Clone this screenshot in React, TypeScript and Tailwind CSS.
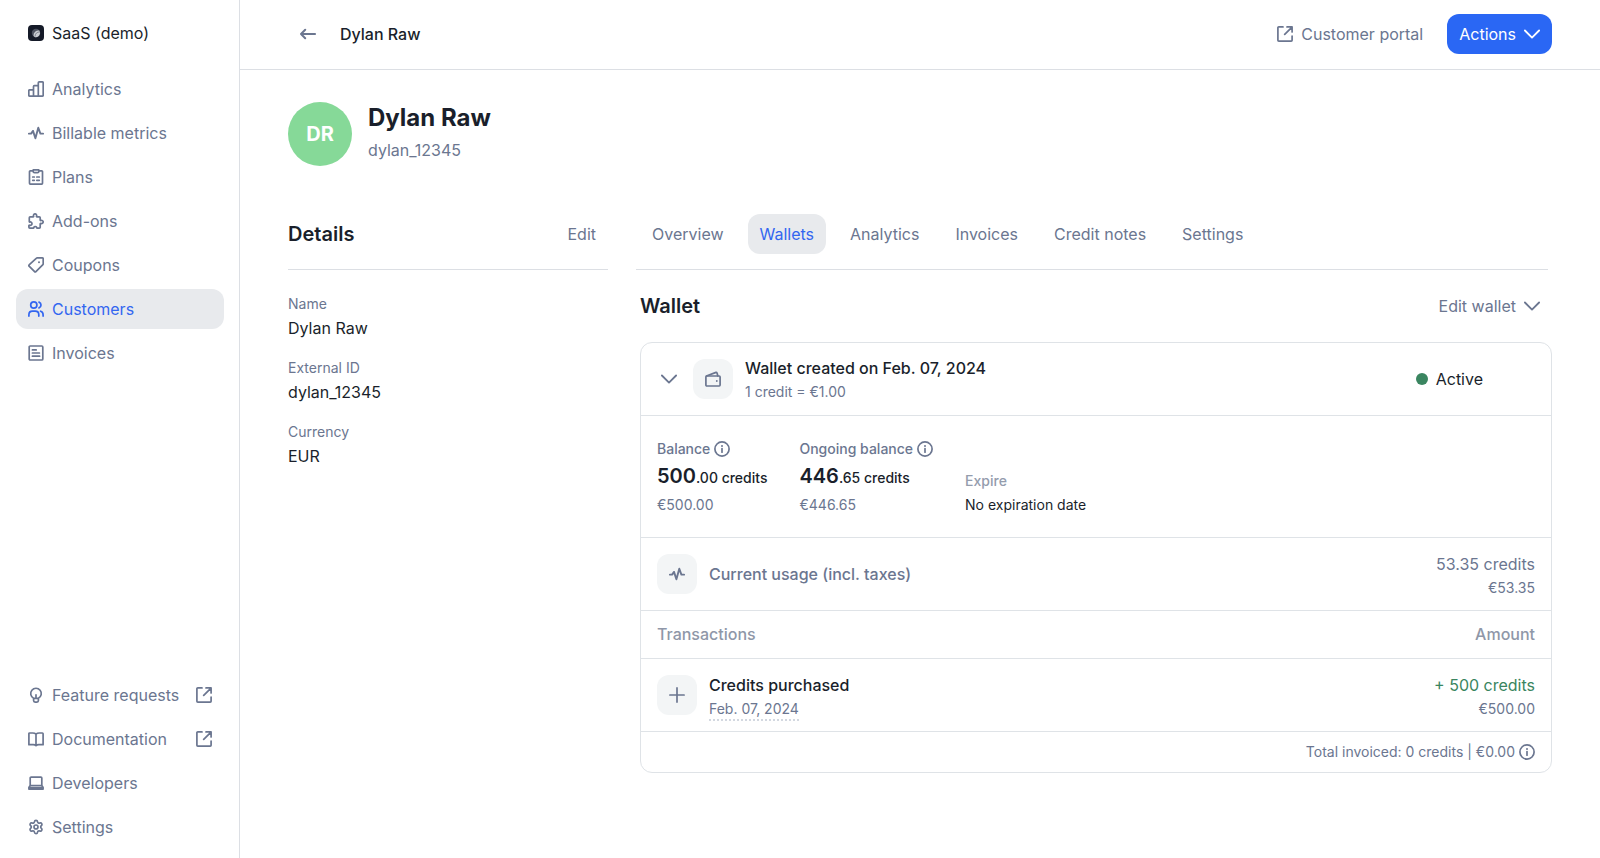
import type { ReactNode } from "react";
import { Settings } from "lucide-react";

type IconProps = { className?: string; children?: ReactNode };

function Icon({ className = "size-4", children }: IconProps) {
  return (
    <svg
      viewBox="0 0 16 16"
      fill="none"
      stroke="currentColor"
      strokeWidth="1.7"
      strokeLinecap="round"
      strokeLinejoin="round"
      aria-hidden="true"
      className={`shrink-0 ${className}`}
    >
      {children}
    </svg>
  );
}

const ChartIcon = () => (
  <Icon>
    <path d="M5.5 15.1H1.7a.9.9 0 0 1-.9-.9V9.7c0-.5.4-.9.9-.9h3.8M5.5 15.1V5.6c0-.5.4-.9.9-.9h3.9M5.5 15.1h4.8M10.3 15.1V1.8c0-.5.4-.9.9-.9h3.1c.5 0 .9.4.9.9v12.4c0 .5-.4.9-.9.9h-4z" />
  </Icon>
);

const PulseIcon = () => (
  <Icon>
    <path d="M.9 8.6h2.2L5 5.9l2.4 7.4 2.9-10.6 2.1 5.9h2.7" strokeWidth="1.9" />
  </Icon>
);

const BoardIcon = () => (
  <Icon>
    <path d="M5 1.9H2.3a.8.8 0 0 0-.8.8v11.6c0 .5.3.8.8.8h11.4c.5 0 .8-.3.8-.8V2.7a.8.8 0 0 0-.8-.8H11" />
    <path d="M5.2.9h5.6v1.5a1.3 1.3 0 0 1-1.3 1.3h-3a1.3 1.3 0 0 1-1.3-1.3V.9z" />
    <path d="M4.7 8h1.6M8.8 8h2.5M4.7 11.3h1.6M8.8 11.3h2.5" />
  </Icon>
);

const PuzzleIcon = () => (
  <Icon>
    <path d="M2.3 3.9h2.9c.4 0 .5-.4.4-.7a1.6 1.6 0 1 1 2.9 0c-.1.3 0 .7.4.7h2.4c.5 0 .9.4.9.9v2.3c0 .4.4.5.7.4a1.6 1.6 0 1 1 0 2.9c-.3-.1-.7 0-.7.4v3.4c0 .5-.4.9-.9.9H9.1c-.4 0-.5-.4-.4-.7a1.6 1.6 0 0 0-2.9 0c.1.3 0 .7-.4.7H1.8a.9.9 0 0 1-.9-.9v-1.6c0-.4.4-.5.7-.4a1.7 1.7 0 1 0 0-3.1c-.2 0-.3-.1-.3-.3V4.800c0-.5.4-.9.9-.9" />
  </Icon>
);

const TagIcon = () => (
  <Icon>
    <path d="M9.2.9h5.1c.5 0 .9.4.9.9v5.1c0 .3-.1.5-.3.7l-7 7.1c-.4.4-1 .4-1.3 0L1.1 9.2c-.4-.4-.4-1 0-1.3L8.5 1.2c.2-.2.4-.3.7-.3z" />
    <circle cx="11" cy="5.2" r="1" fill="currentColor" stroke="none" />
  </Icon>
);

const UsersIcon = () => (
  <Icon>
    <circle cx="5.8" cy="4" r="3.1" />
    <path d="M.9 15.1v-1.4c0-2.2 1.7-3.6 3.6-3.6h2.7c1.9 0 3.6 1.4 3.6 3.6v1.4M11 1.1a3.1 3.1 0 0 1 0 5.8M12.6 10.2c1.5.4 2.5 1.7 2.5 3.5v1.4" />
  </Icon>
);

const DocumentIcon = () => (
  <Icon>
    <rect x="1.2" y="1" width="13.6" height="14" rx="1" />
    <path d="M4.4 4.9h3.8M4.4 8h7M4.4 11.2h7.2" />
  </Icon>
);

const BulbIcon = () => (
  <Icon>
    <path d="M5.6 11.3a5.300 5.300 0 1 1 4.800 0M5.6 11.300v2.300c0 .8.700 1.500 1.500 1.500h1.800c.8 0 1.500-.7 1.500-1.500v-2.300zM8 11V7.800" />
  </Icon>
);

const BookIcon = () => (
  <Icon>
    <path d="M8 3.2C7.2 2.4 6 2 4.7 2H1.6c-.4 0-.7.3-.7.7v11h4.3c1.2 0 2.2.3 2.8.9.6-.6 1.6-.9 2.8-.9h4.3v-11c0-.4-.3-.7-.7-.7h-3.1C10 2 8.8 2.4 8 3.2zM8 3.2v11" />
  </Icon>
);

const LaptopIcon = () => (
  <Icon>
    <path d="M2.2 10.5V3.1c0-.5.4-.9.9-.9h9.8c.5 0 .9.4.9.9v7.4M.9 14.1v-1.600l1.300-2h11.600l1.300 2v1.600zM1 12.700h14" />
  </Icon>
);

const ExternalIcon = () => (
  <Icon>
    <path d="M6 .9H1.800a.9.9 0 0 0-.9.9v12.400c0 .5.4.9.9.9h12.400c.5 0 .9-.4.9-.9V10M10 .9h5.100V6M15 1.100L7.700 8.400" />
  </Icon>
);

const ArrowLeftIcon = () => (
  <Icon>
    <path d="M15.1 8H1M5.200 3.800L1 8l4.200 4.200" strokeWidth="2" />
  </Icon>
);

const ChevronDownIcon = () => (
  <Icon>
    <path d="M.9 4.500L8 11.600l7.100-7.100" strokeWidth="1.800" />
  </Icon>
);

const WalletIcon = () => (
  <Icon>
    <rect x=".9" y="5" width="14.2" height="10" rx=".9" />
    <path d="M1.400 5L11 1.400c.5-.2 1 .1 1.100.6L12.800 5" />
    <circle cx="11.8" cy="10" r=".9" fill="currentColor" stroke="none" />
  </Icon>
);

const PlusIcon = () => (
  <Icon>
    <path d="M8 .9v14.200M.9 8h14.200" />
  </Icon>
);

const InfoIcon = () => (
  <Icon>
    <circle cx="8" cy="8" r="7.1" />
    <path d="M8 7.600v3.600" />
    <circle cx="8" cy="4.900" r="1" fill="currentColor" stroke="none" />
  </Icon>
);

const MAIN_NAV = [
  { label: "Analytics", icon: <ChartIcon /> },
  { label: "Billable metrics", icon: <PulseIcon /> },
  { label: "Plans", icon: <BoardIcon /> },
  { label: "Add-ons", icon: <PuzzleIcon /> },
  { label: "Coupons", icon: <TagIcon /> },
  { label: "Customers", icon: <UsersIcon />, active: true },
  { label: "Invoices", icon: <DocumentIcon /> },
];

const BOTTOM_NAV = [
  { label: "Feature requests", icon: <BulbIcon />, external: true },
  { label: "Documentation", icon: <BookIcon />, external: true },
  { label: "Developers", icon: <LaptopIcon /> },
  { label: "Settings", icon: <Settings className="size-4 shrink-0" strokeWidth={2.5} aria-hidden="true" /> },
];

const TABS = ["Overview", "Wallets", "Analytics", "Invoices", "Credit notes", "Settings"];

const DETAILS = [
  { label: "Name", value: "Dylan Raw" },
  { label: "External ID", value: "dylan_12345" },
  { label: "Currency", value: "EUR" },
];

const BALANCES = [
  { label: "Balance", whole: "500", cents: ".00 credits", amount: "€500.00" },
  { label: "Ongoing balance", whole: "446", cents: ".65 credits", amount: "€446.65" },
];

function NavItem({
  label,
  icon,
  active,
  external,
}: {
  label: string;
  icon: ReactNode;
  active?: boolean;
  external?: boolean;
}) {
  return (
    <li>
      <a
        href="#"
        aria-current={active ? "page" : undefined}
        className={`flex h-10 items-center gap-2 rounded-xl px-3 ${
          active ? "bg-[#e8eaed] text-[#3366f0]" : "text-[#6b7690]"
        }`}
      >
        {icon}
        <span className="flex-1 whitespace-nowrap">{label}</span>
        {external && <ExternalIcon />}
      </a>
    </li>
  );
}

function Sidebar() {
  return (
    <aside className="flex w-60 shrink-0 flex-col border-r border-[#dcdfe4] pt-[13px] pr-[15px] pb-[11px] pl-4">
      <button type="button" className="flex h-10 items-center gap-2 px-3 text-left">
        <svg viewBox="0 0 16 16" className="size-4 shrink-0" aria-hidden="true">
          <rect width="16" height="16" rx="4" fill="#151a28" />
          <circle cx="8" cy="8" r="4.2" fill="#4d5260" />
          <path d="M5.500 10.800a5 5 0 0 1 5.800-5.200 4.200 4.200 0 0 1-4.700 6.400z" fill="#c9ccd2" />
          <path d="M7 11.500a5 5 0 0 1 5-4.600" stroke="#6d717d" strokeWidth=".8" fill="none" />
        </svg>
        SaaS (demo)
      </button>
      <nav aria-label="Main" className="mt-4">
        <ul className="flex flex-col gap-1">
          {MAIN_NAV.map((item) => (
            <NavItem key={item.label} {...item} />
          ))}
        </ul>
      </nav>
      <nav aria-label="Resources" className="mt-auto">
        <ul className="flex flex-col gap-1">
          {BOTTOM_NAV.map((item) => (
            <NavItem key={item.label} {...item} />
          ))}
        </ul>
      </nav>
    </aside>
  );
}

function TopBar() {
  return (
    <header className="flex h-[70px] items-center border-b border-[#dcdfe4] px-12 pb-px">
      <button
        type="button"
        aria-label="Back to customers"
        className="flex size-10 items-center justify-center text-[#6b7690]"
      >
        <ArrowLeftIcon />
      </button>
      <span className="ml-3 flex-1 font-medium">Dylan Raw</span>
      <a href="#" className="flex h-10 items-center gap-2 px-3 text-[#6b7690]">
        <ExternalIcon />
        Customer portal
      </a>
      <button
        type="button"
        className="ml-3 flex h-10 items-center gap-2 rounded-xl bg-[#2a67f4] px-3 text-white"
      >
        Actions
        <ChevronDownIcon />
      </button>
    </header>
  );
}

function Details() {
  return (
    <section className="w-80 shrink-0">
      <div className="flex h-14 items-start justify-between border-b border-[#dcdfe4]">
        <h2 className="text-xl leading-10 font-semibold">Details</h2>
        <button type="button" className="h-10 px-3 text-[#6b7690]">
          Edit
        </button>
      </div>
      <dl className="mt-[22px] flex flex-col gap-4">
        {DETAILS.map((d) => (
          <div key={d.label}>
            <dt className="text-sm leading-6 text-[#6b7690]">{d.label}</dt>
            <dd className="leading-6">{d.value}</dd>
          </div>
        ))}
      </dl>
    </section>
  );
}

function IconTile({ children }: { children: ReactNode }) {
  return (
    <span className="flex size-10 shrink-0 items-center justify-center rounded-xl bg-[#f3f5f6] text-[#6b7690]">
      {children}
    </span>
  );
}

function WalletCard() {
  return (
    <article className="rounded-xl border border-[#dfe3e7]">
      <div className="flex h-[73px] items-center border-b border-[#dfe3e7] px-5">
        <button type="button" aria-label="Collapse wallet" className="mr-4 text-[#6b7690]">
          <ChevronDownIcon />
        </button>
        <IconTile>
          <WalletIcon />
        </IconTile>
        <div className="ml-3 flex-1 pt-0.5 leading-6">
          <h3 className="font-medium">Wallet created on Feb. 07, 2024</h3>
          <p className="text-sm leading-6 text-[#6b7690]">1 credit = €1.00</p>
        </div>
        <div className="mr-12 flex items-center gap-2">
          <span className="size-3 rounded-full bg-[#3a8560]" />
          Active
        </div>
      </div>

      <div className="flex h-[122px] items-center border-b border-[#dfe3e7] px-4">
        <div className="flex items-end gap-8">
          {BALANCES.map((b) => (
            <div key={b.label}>
              <p className="flex items-center gap-1 text-sm leading-6 font-medium text-[#6b7690]">
                {b.label}
                <InfoIcon />
              </p>
              <p className="text-sm leading-[30px] font-medium">
                <span className="text-xl leading-[30px] font-semibold">{b.whole}</span>
                {b.cents}
              </p>
              <p className="text-sm leading-6 text-[#6b7690]">{b.amount}</p>
            </div>
          ))}
          <div>
            <p className="text-sm leading-6 font-medium text-[#949cad]">Expire</p>
            <p className="text-sm leading-6">No expiration date</p>
          </div>
        </div>
      </div>

      <div className="flex h-[73px] items-center border-b border-[#dfe3e7] px-4 text-[#6b7690]">
        <IconTile>
          <PulseIcon />
        </IconTile>
        <h3 className="ml-3 flex-1 font-medium">Current usage (incl. taxes)</h3>
        <div className="pt-1 text-right leading-6">
          <p>53.35 credits</p>
          <p className="text-sm leading-6">€53.35</p>
        </div>
      </div>

      <table className="w-full border-collapse">
        <thead>
          <tr className="h-[47px] border-b border-[#dfe3e7] text-[#8f97a8]">
            <th scope="col" className="px-4 text-left font-medium">
              Transactions
            </th>
            <th scope="col" className="px-4 text-right font-medium">
              Amount
            </th>
          </tr>
        </thead>
        <tbody>
          <tr className="h-[73px] border-b border-[#dfe3e7]">
            <td className="px-4">
              <div className="flex items-center gap-3">
                <IconTile>
                  <PlusIcon />
                </IconTile>
                <div className="pt-1 leading-6">
                  <p className="font-medium">Credits purchased</p>
                  <time
                    dateTime="2024-02-07"
                    className="block h-6 w-fit border-b-2 border-dotted border-[#d3d8e0] text-sm leading-6 text-[#6b7690]"
                  >
                    Feb. 07, 2024
                  </time>
                </div>
              </div>
            </td>
            <td className="px-4 pt-1 text-right leading-6">
              <p className="text-[#3a8560]">+ 500 credits</p>
              <p className="text-sm leading-6 text-[#6b7690]">€500.00</p>
            </td>
          </tr>
        </tbody>
      </table>

      <footer className="flex h-10 items-center justify-end gap-1 px-4 text-sm text-[#6b7690]">
        Total invoiced: 0 credits | €0.00
        <InfoIcon />
      </footer>
    </article>
  );
}

export default function App() {
  return (
    <div className="flex min-h-screen bg-white font-['Inter',sans-serif] text-base text-[#1a1f2b]">
      <Sidebar />
      <div className="min-w-0 flex-1">
        <TopBar />
        <main className="px-12 pt-8 pb-20">
          <div className="flex h-16 gap-4">
            <div className="flex size-16 shrink-0 items-center justify-center rounded-full bg-[#86d998] text-xl font-bold text-white">
              DR
            </div>
            <div>
              <h1 className="text-2xl leading-8 font-bold">Dylan Raw</h1>
              <p className="mt-1 leading-6 text-[#6b7690]">dylan_12345</p>
            </div>
          </div>

          <div className="mt-12 flex gap-7">
            <Details />
            <section className="min-w-0 flex-1">
              <nav
                aria-label="Customer"
                className="mr-1 flex h-14 items-start gap-3 border-b border-[#dcdfe4] pl-1"
              >
                {TABS.map((tab) => (
                  <a
                    key={tab}
                    href="#"
                    className={`flex h-10 items-center rounded-xl px-3 whitespace-nowrap ${
                      tab === "Wallets" ? "bg-[#e8eaed] text-[#3366f0]" : "text-[#6b7690]"
                    }`}
                  >
                    {tab}
                  </a>
                ))}
              </nav>
              <div className="pt-4 pl-1">
                <div className="mb-4 flex h-10 items-center justify-between">
                  <h2 className="text-xl font-semibold">Wallet</h2>
                  <button type="button" className="flex h-10 items-center gap-2 px-3 text-[#6b7690]">
                    Edit wallet
                    <ChevronDownIcon />
                  </button>
                </div>
                <WalletCard />
              </div>
            </section>
          </div>
        </main>
      </div>
    </div>
  );
}
